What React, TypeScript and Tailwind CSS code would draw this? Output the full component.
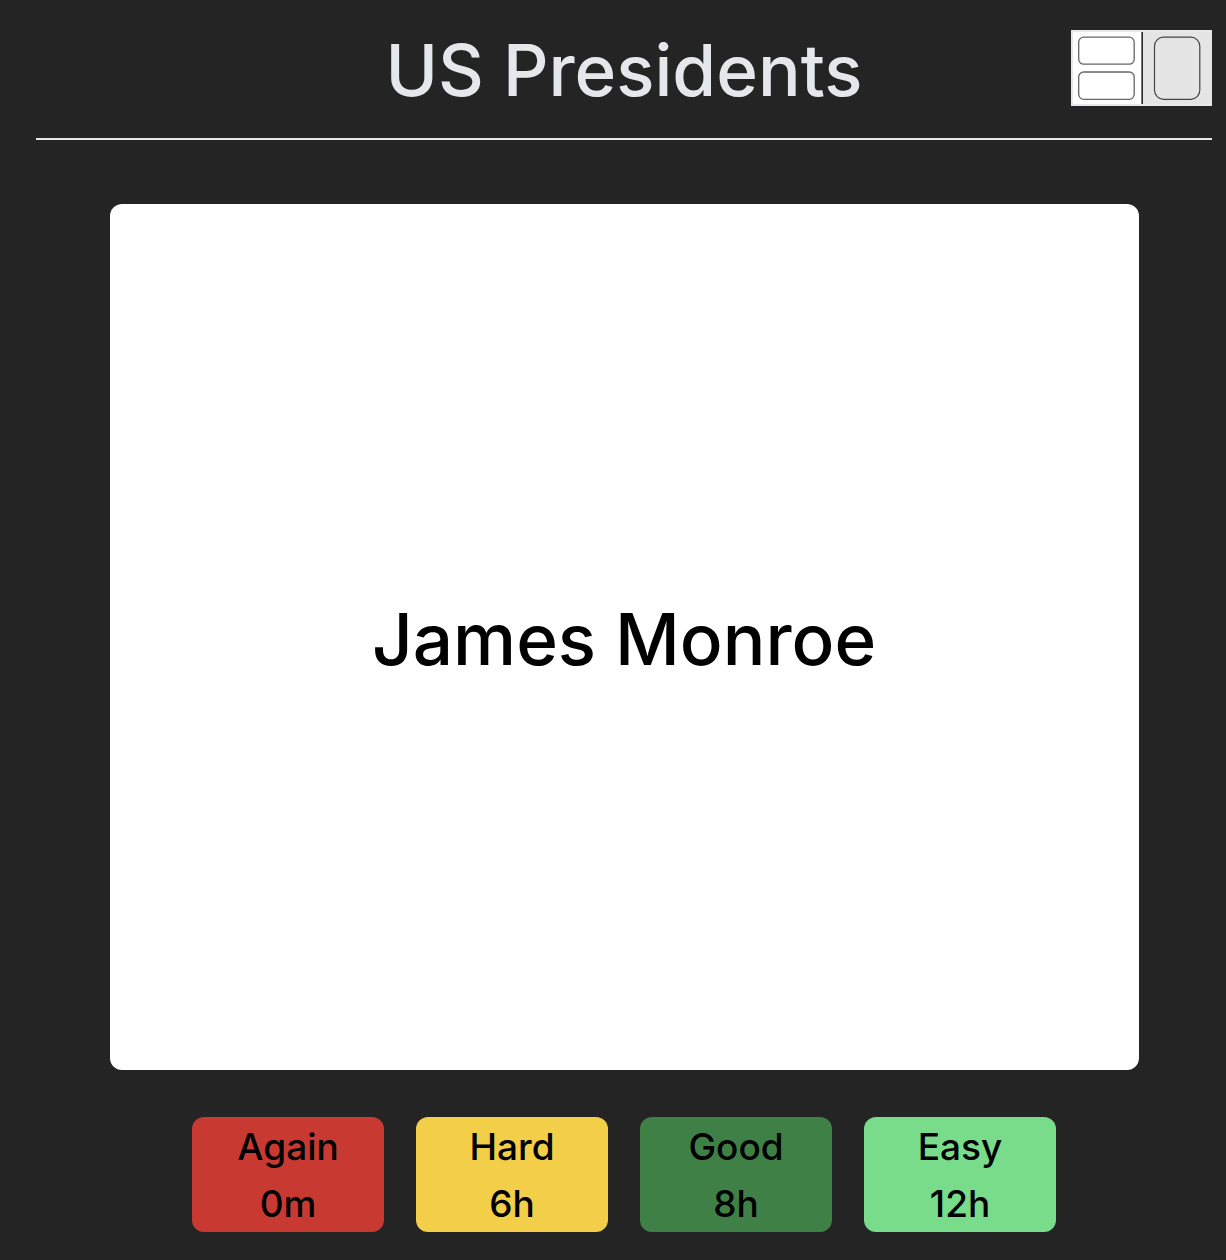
const ratings = [
  { label: "Again", interval: "0m", color: "bg-[#c83a31]" },
  { label: "Hard", interval: "6h", color: "bg-[#f2ce49]" },
  { label: "Good", interval: "8h", color: "bg-[#3e8045]" },
  { label: "Easy", interval: "12h", color: "bg-[#79dc8a]" },
];

function LayoutIcon() {
  return (
    <svg width="141" height="76" viewBox="0 0 141 76" fill="none" aria-hidden="true">
      <rect width="141" height="76" fill="#e5e7eb" />
      <rect x="2" y="2" width="68" height="72" fill="#ffffff" />
      <rect x="72" y="2" width="69" height="72" fill="#e5e5e5" />
      <rect x="70" y="2" width="1" height="72" fill="#777777" />
      <rect x="71" y="2" width="1" height="72" fill="#2a2a2a" />
      <rect x="7.7" y="7.2" width="55.5" height="27" rx="5" stroke="#666666" strokeWidth="1.3" />
      <rect x="7.7" y="42" width="55.5" height="27.3" rx="5" stroke="#666666" strokeWidth="1.3" />
      <rect x="83.5" y="7.2" width="45.3" height="62.1" rx="9" stroke="#444444" strokeWidth="1.2" />
    </svg>
  );
}

export default function App() {
  return (
    <div className="min-h-screen bg-[#242424] pt-[30px] pr-3.5 pb-7 pl-9 font-['Inter',sans-serif] font-medium">
      <header className="grid grid-cols-[1fr_auto_1fr] border-b-2 border-gray-200 pb-7">
        <h1 className="col-start-2 text-[71px] leading-[80px] text-gray-200">US Presidents</h1>
        <button type="button" aria-label="Switch layout" className="self-start justify-self-end">
          <LayoutIcon />
        </button>
      </header>
      <main className="flex flex-col items-center pt-16">
        <section className="flex min-h-[866px] w-7/8 items-center justify-center rounded-xl bg-white pt-1">
          <p className="text-[71px] leading-[80px] text-black">James Monroe</p>
        </section>
        <div className="mt-[47px] flex justify-center gap-8">
          {ratings.map((r) => (
            <button
              key={r.label}
              type="button"
              className={`flex w-48 flex-col items-center rounded-xl pt-px text-[37px] leading-[57px] text-black ${r.color}`}
            >
              <span>{r.label}</span>
              <span>{r.interval}</span>
            </button>
          ))}
        </div>
      </main>
    </div>
  );
}
